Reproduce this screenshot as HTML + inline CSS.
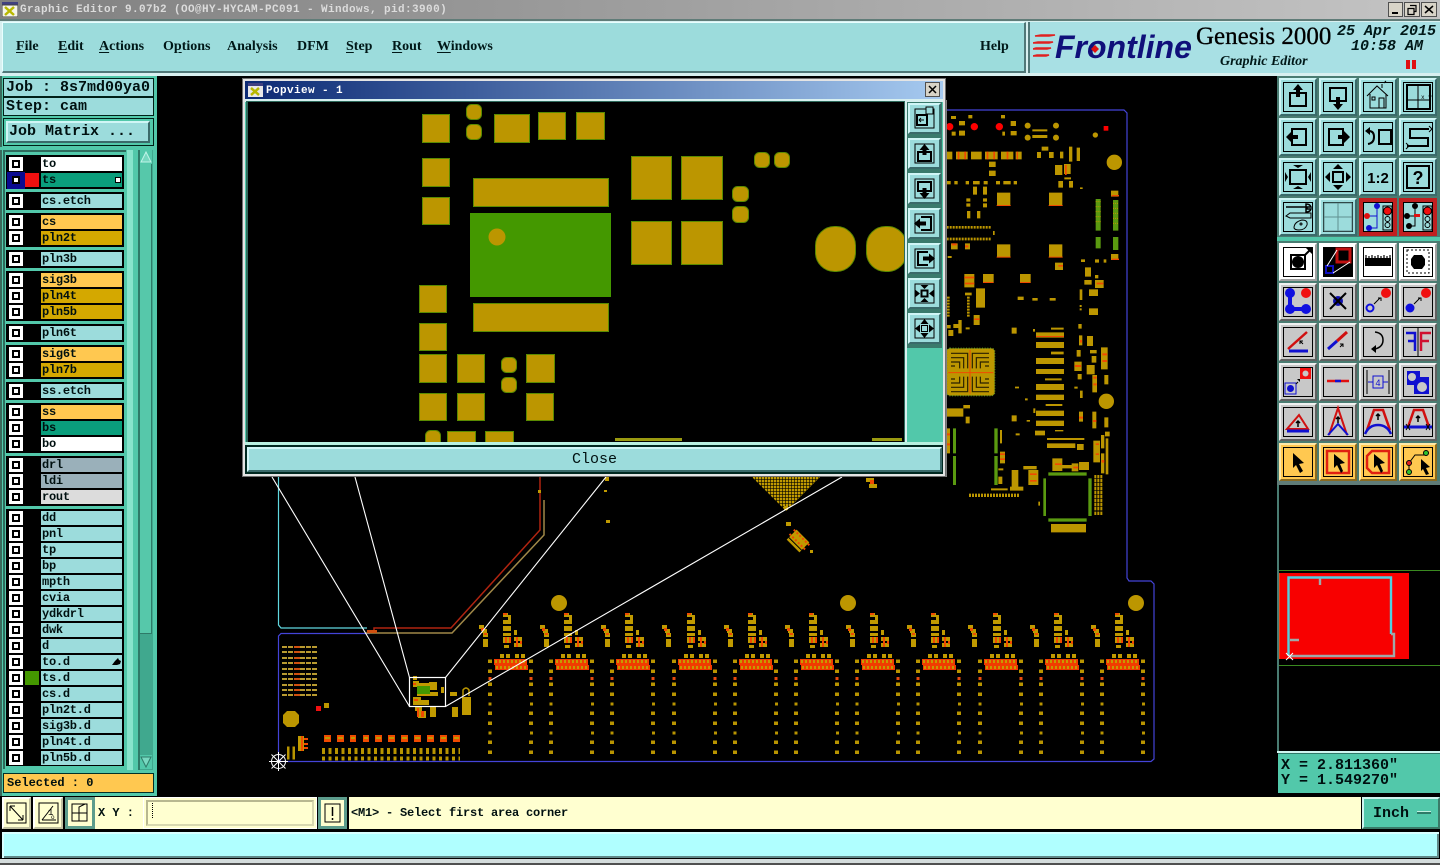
<!DOCTYPE html>
<html><head><meta charset="utf-8"><title>Genesis 2000 Graphic Editor</title>
<style>
html,body{margin:0;padding:0;background:#000;width:1440px;height:865px;overflow:hidden}
div,span,b,i,svg{box-sizing:border-box}
.a{position:absolute}
#pcb{position:absolute;left:0;top:0}
.mono{font-family:"Liberation Mono",monospace;font-weight:bold;color:#001010;white-space:pre}
.m{position:absolute;top:39px;font:bold 14px/16px "Liberation Serif",serif;color:#001818;white-space:pre}
.m u{text-decoration-thickness:1px;text-underline-offset:2px}
.g{position:absolute;left:6px;width:118px;background:#000}
.r{position:absolute;left:9px;width:113px;height:14px}
.c{position:absolute;left:0;top:0;width:14px;height:14px;background:#fff}
.c::after{content:"";position:absolute;left:3px;top:3px;width:8px;height:8px;border:2px solid #000;box-sizing:border-box;background:#fff}
.r span{position:absolute;left:32px;top:0;width:81px;height:14px;padding-left:1px;background:#9cdcdc;font:bold 12px/14px "Liberation Mono",monospace;letter-spacing:-.25px;color:#001010;white-space:pre}
.r .w{background:#fff}.r .e{background:#0a9e7c}.r .o{background:#ffc850}.r .y{background:#d4a800}.r .s{background:#9ab0ba}.r .l{background:#dcdcdc}
.t{position:absolute;width:38px;height:38px;background:#9cdcdc;border:2px solid;border-color:#d0f6f6 #3a6a6a #3a6a6a #d0f6f6}
.t::after{content:"";position:absolute;left:2px;top:2px;right:2px;bottom:2px;border:1px solid #000}
.t svg{position:absolute;left:-2px;top:-2px;width:38px;height:38px;z-index:1}
.k{background:#c8c8c8;border-color:#f0f0f0 #606060 #606060 #f0f0f0}
.h{background:#fff;border-color:#fff #a0a0a0 #a0a0a0 #fff}
.q{background:#ffc850;border-color:#ffe8a8 #8a6a20 #8a6a20 #ffe8a8}
.p{position:absolute;left:908px;width:33px;height:31px;background:#9cdcdc;border:2px solid;border-color:#d0f6f6 #3a6a6a #3a6a6a #d0f6f6}
.p svg{position:absolute;left:-2px;top:-2px;width:33px;height:31px}
.f{position:absolute;background:#ffffd0;border:2px solid;border-color:#fff #c0c0a0 #c0c0a0 #fff}
</style></head><body>

<svg id="pcb" width="1440" height="865" viewBox="0 0 1440 865">
<defs>
<g id="mod">
 <path fill="#c09a00" d="M-8 613h5v4h-5zM-3 615h3v5h-3zM-8 620h8v4h-8zM-8 626h8v5h-8zM-8 633h8v3h-8zM-8 637h8v6h-8zM-7 645h5v3h-5zM3 630h3v5h-3zM3 637h8v4h-8zM3 643h8v4h-8z"/>
 <path fill="#f04a00" d="M-8 613h4v2h-4zM-6 637h2v6h-2zM-2 637h2v6h-2zM5 637h2v10h-2zM9 641h2v3h-2z"/>
 <path fill="#c09a00" d="M-11 654h4v4h-4zM-5 654h4v4h-4zM4 654h4v4h-4zM10 654h4v4h-4z"/>
 <rect x="-17" y="659" width="33" height="6" fill="#f03c00"/><rect x="-16" y="665" width="33" height="5" fill="#f03c00"/>
 <path stroke="#c89a00" stroke-width="3" stroke-dasharray="2 2" fill="none" d="M-16 661.500h31M-15 667.500h31"/>
 <path fill="#b89400" d="M18 659.500h4v3.500h-4zM18 669.500h4v3.500h-4zM18 682.500h4v3.500h-4zM18 692.500h4v3.500h-4zM19 702.500h3v3h-3zM18 711.500h4v3.500h-4zM18 721.500h4v3.500h-4zM19 731.500h3v3h-3zM18 740.500h4v3.500h-4zM18 750.500h4v3.500h-4z"/>
 <path fill="#b89400" d="M-23 659.500h4v3.500h-4zM-23 669.500h4v3.500h-4zM-23 682.500h4v3.500h-4zM-23 692.500h4v3.500h-4zM-22.500 702.500h3v3h-3zM-23 711.500h4v3.500h-4zM-23 721.500h4v3.500h-4zM-22.500 731.500h3v3h-3zM-23 740.500h4v3.500h-4zM-23 750.500h4v3.500h-4z"/>
 <path fill="#e84a10" d="M18.500 677h3v3h-3zM-22.500 677h3v3h-3z"/>
</g>
<g id="side"><path fill="#c09a00" d="M29 625h5v4h-5zM32 629h5v4h-5zM33 633h5v4h-5zM33 639h5v8h-5z"/><path fill="#f04a00" d="M31 628h3v3h-3zM34 633h3v2h-3z"/></g>
<pattern id="hatch" width="3" height="3" patternUnits="userSpaceOnUse"><rect width="3" height="3" fill="#000"/><rect width="2.400" height="2.400" fill="#c09a00"/></pattern>
</defs>

<!-- board outline -->
<path fill="none" stroke="#4444d8" stroke-width="1.200" d="M946 110H1124L1127 113V578L1129 581H1151L1154 584V759L1151 761.500H281L278.500 759V636L281 633.500H370"/>
<path fill="none" stroke="#60d8e0" stroke-width="1.200" d="M278.500 477V625L281 628H367"/>
<path fill="none" stroke="#b02410" stroke-width="1.500" d="M369 631H374V628H451L540 530V477"/>
<path fill="none" stroke="#a08848" stroke-width="1.500" d="M366 633H452L544 535V500"/>
<rect x="367" y="630" width="10" height="3" fill="#d05010"/>

<!-- modules -->
<use href="#mod" x="511"/><use href="#mod" x="572"/><use href="#mod" x="633"/><use href="#mod" x="695"/><use href="#mod" x="756"/><use href="#mod" x="817"/><use href="#mod" x="878"/><use href="#mod" x="939"/><use href="#mod" x="1001"/><use href="#mod" x="1062"/><use href="#mod" x="1123"/>
<use href="#side" x="511"/><use href="#side" x="572"/><use href="#side" x="633"/><use href="#side" x="695"/><use href="#side" x="756"/><use href="#side" x="817"/><use href="#side" x="878"/><use href="#side" x="939"/><use href="#side" x="1001"/><use href="#side" x="1062"/>
<use href="#side" x="450"/>
<circle cx="559" cy="603" r="8" fill="#bc9600"/><circle cx="848" cy="603" r="8" fill="#bc9600"/><circle cx="1136" cy="603" r="8" fill="#bc9600"/>

<!-- bottom left -->
<path stroke="#b89a30" stroke-width="2" stroke-dasharray="5 1" fill="none" d="M282 647h36M282 652h36M282 658h36M282 663h36M282 669h36M282 674h36M282 679h36M282 685h36M282 690h36M282 695h36"/>
<path stroke="#d05010" stroke-width="2" stroke-dasharray="6 30" fill="none" d="M294 647h24M294 652h24M294 658h24M294 663h24M294 669h24M294 674h24M294 679h24M294 685h24M294 690h24M294 695h24"/>
<polygon points="287,711 295,711 299,715 299,723 295,727 287,727 283,723 283,715" fill="#bc9600"/>
<rect x="316" y="706" width="5" height="5" fill="#f01010"/><rect x="324" y="703" width="5" height="5" fill="#bc9600"/>
<path fill="#f04a00" d="M324 735h7v7h-7zM337 735h7v7h-7zM350 735h6v7h-6zM363 735h6v7h-6zM375 735h7v7h-7zM388 735h7v7h-7zM401 735h7v7h-7zM414 735h7v7h-7zM427 735h7v7h-7zM440 735h7v7h-7zM453 735h7v7h-7z"/>
<path fill="#c09a00" d="M325 737h5v2h-5zM338 737h5v2h-5zM351 737h4v2h-4zM364 737h4v2h-4zM376 737h5v2h-5zM389 737h5v2h-5zM402 737h5v2h-5zM415 737h5v2h-5zM428 737h5v2h-5zM441 737h5v2h-5zM454 737h5v2h-5z"/>
<path stroke="#b89400" stroke-width="6" stroke-dasharray="3 3.500" fill="none" d="M322 751h138"/>
<path stroke="#b89400" stroke-width="4" stroke-dasharray="3 3.500" fill="none" d="M322 758.500h138"/>
<path stroke="#b89400" stroke-width="13" stroke-dasharray="2.500 3" fill="none" d="M287 753h10"/>
<path fill="#c09a00" d="M298 736h6v15h-6z"/><path fill="#f04a00" d="M301 736h2v15h-2zM304 738h4v2h-4zM304 743h4v2h-4zM304 747h4v2h-4z"/>
<!-- small component at popup box -->
<path fill="#c09a00" d="M413 676h4v4h-4zM413 681h6v6h-6zM429 682h8v8h-8zM430 692h8v4h-8zM413 697h8v8h-8zM421 700h8v5h-8zM415 706h7v5h-7zM418 711h8v7h-8zM430 707h6v10h-6zM452 707h6v10h-6zM441 687h3v6h-3zM450 692h7v4h-7zM462 697h9v18h-9z"/>
<path fill="#f04a00" d="M413 683h3v2h-3zM414 699h4v2h-4zM417 708h2v9h-2zM421 711h3v6h-3z"/>
<rect x="417" y="683" width="13" height="13" fill="#449800"/><rect x="417" y="683" width="13" height="3" fill="#c09a00"/><rect x="417" y="694" width="13" height="2" fill="#c09a00"/>
<path fill="none" stroke="#b89400" stroke-width="1.500" d="M463 696V690Q466 686 469 690V696"/>

<!-- funnel, loose comps -->
<polygon points="752,477 820,477 786,511" fill="url(#hatch)"/>
<path fill="#c09a00" d="M866 478h8v4h-8zM869 484h8v4h-8zM605 477h4v4h-4zM604 490h3v2h-3zM606 520h4v3h-4zM538 490h3v3h-3z"/>
<rect x="870" y="480" width="4" height="4" fill="#f04a00"/>
<g transform="translate(798,541) rotate(45)"><rect x="-9" y="-7" width="18" height="14" fill="#c09a00"/><path stroke="#f04a00" stroke-width="2" stroke-dasharray="2 2" d="M-11 -5h22M-11 1h22"/><path stroke="#000" stroke-width="1" d="M-9 4h18"/></g>
<path fill="#c09a00" d="M786 522h5v4h-5zM810 550h3v3h-3zM784 506h4v4h-4z"/>

<!-- upper right board -->
<g transform="translate(945,100) scale(.33333)">
<circle cx="14" cy="80" r="11" fill="#f00"/><circle cx="88" cy="80" r="11" fill="#f00"/><circle cx="163" cy="80" r="11" fill="#f00"/>
<rect x="476" y="78" width="14" height="14" fill="#f00"/>
<g fill="#bc9600"><circle cx="248" cy="77" r="9"/><circle cx="333" cy="77" r="9"/><circle cx="248" cy="113" r="9"/><circle cx="333" cy="113" r="9"/><circle cx="508" cy="187" r="23"/><circle cx="484" cy="904" r="23"/><circle cx="451" cy="105" r="8"/></g>
<path fill="#bc9600" d="M18 48h15v9h-15zM70 45h12v10h-12zM168 45h12v10h-12zM5 155h17v23h-17zM33 155h35v23h-35zM78 155h32v23h-32zM120 155h38v23h-38zM168 155h37v23h-37zM212 155h18v23h-18zM42 63h18v13h-18zM197 63h16v15h-16zM20 95h12v12h-12zM42 92h18v15h-18zM172 95h8v12h-8zM197 93h18v13h-18zM262 88h45v6h-45zM262 105h45v9h-45zM290 140h20v12h-20zM276 156h12v18h-12zM312 156h14v18h-14zM372 140h10v45h-10zM395 143h10v40h-10zM345 155h10v20h-10zM330 195h22v30h-22zM357 192h20v30h-20zM358 232h20v6h-20zM340 243h14v20h-14zM372 243h12v20h-12zM405 262h8v5h-8zM132 185h20v16h-20zM132 212h20v16h-20zM5 243h12v10h-12zM28 243h10v10h-10zM62 243h10v10h-10zM84 243h20v10h-20zM116 243h12v10h-12zM153 243h12v10h-12zM175 243h22v10h-22zM206 243h10v10h-10zM84 260h12v24h-12zM114 260h12v24h-12zM64 295h12v10h-12zM64 310h12v10h-12zM114 295h12v10h-12zM114 310h12v12h-12zM66 333h10v22h-10zM96 333h10v22h-10zM144 393h5v12h-5zM18 430h20v18h-20zM60 430h15v18h-15zM8 468h12v6h-12zM156 278h40v39h-40zM312 278h40v39h-40zM156 433h40v39h-40zM312 433h40v39h-40zM114 522h32v26h-32zM225 522h32v26h-32zM93 565h27v58h-27zM58 522h30v40h-30zM218 590h18v10h-18zM262 594h16v8h-16zM314 594h18v8h-18zM60 578h20v8h-20zM86 645h18v30h-18zM5 675h12v10h-12zM25 672h16v12h-16zM40 660h10v40h-10zM62 682h12v6h-12zM10 690h15v18h-15zM200 683h15v18h-15zM264 687h6v8h-6zM200 946h15v18h-15zM318 683h38v6h-38zM273 697h84v16h-84zM273 726h84v18h-84zM318 755h38v8h-38zM273 774h84v18h-84zM273 807h84v15h-84zM300 835h50v6h-50zM273 852h84v18h-84zM273 884h84v16h-84zM302 912h50v6h-50zM273 932h84v16h-84zM273 962h84v16h-84zM330 990h25v4h-25zM404 568h8v32h-8zM404 615h6v6h-6zM404 625h6v6h-6zM432 568h27v20h-27zM432 625h27v20h-27zM498 272h22v18h-22zM498 462h22v18h-22zM450 478h12v10h-12zM476 478h8v10h-8zM408 478h12v8h-12zM330 488h24v22h-24zM420 502h18v28h-18zM450 525h10v10h-10zM450 540h26v24h-26zM418 540h22v14h-22zM400 672h10v14h-10zM402 706h10v30h-10zM426 708h18v30h-18zM395 750h12v20h-12zM435 750h20v10h-20zM440 768h14v20h-14zM468 742h20v66h-20zM388 785h22v28h-22zM425 795h24v28h-24zM398 822h12v16h-12zM442 825h14v52h-14zM478 825h12v28h-12zM388 860h10v6h-10zM405 872h8v22h-8zM402 935h12v30h-12zM442 935h12v50h-12zM478 952h12v30h-12zM270 992h30v14h-30zM480 995h14v14h-14zM306 1014h112v6h-112zM306 1030h85v14h-85zM396 1032h20v18h-20zM445 1022h20v65h-20zM468 1005h10v40h-10zM468 1060h10v60h-10zM482 1015h8v108h-8zM322 1075h30v38h-30zM352 1095h28v10h-28zM380 1090h20v24h-20zM402 1086h30v24h-30zM235 1098h40v10h-40zM250 1110h30v45h-30zM200 1110h20v50h-20zM138 1165h50v6h-50zM195 1160h40v12h-40zM165 990h6v40h-6zM165 1055h15v35h-15zM160 1105h15v6h-15zM160 1130h12v22h-12zM5 925h50v25h-50zM55 915h20v10h-20zM62 950h12v20h-12zM5 985h10v75h-10zM318 1272h105v25h-105zM280 1205h5v12h-5zM212 1000h12v6h-12zM240 895h8v6h-8zM210 860h12v5h-12zM265 925h6v14h-6zM245 960h10v5h-10z"/>
<path stroke="#bc9600" stroke-width="8" stroke-dasharray="6 3" fill="none" d="M5 382h135M5 417h135M10 590v60M70 590v60"/>
<path stroke="#bc9600" stroke-width="10" stroke-dasharray="6 3" fill="none" d="M72 1186h152M448 1130h24M448 1142h24M448 1154h24M448 1166h24M448 1178h24M448 1190h24M448 1202h24M448 1214h24M448 1226h24M448 1240h24"/>
<path fill="#f04a00" d="M155 315h42v3h-42zM311 315h42v3h-42zM155 470h42v3h-42zM311 470h42v3h-42zM114 546h32v3h-32zM225 546h32v3h-32zM38 155h5v23h-5zM58 155h5v23h-5zM125 155h5v23h-5zM145 155h5v23h-5zM185 155h5v23h-5zM215 155h4v23h-4zM273 708h84v3h-84zM360 195h5v30h-5zM20 430h15v6h-15zM60 436h10v6h-10zM58 530h30v5h-30zM60 548h28v5h-28zM88 655h16v5h-16zM472 760h14v6h-14zM472 780h14v6h-14zM405 720h6v8h-6zM445 830h10v6h-10zM445 850h10v6h-10zM390 795h18v6h-18zM5 1000h10v6h-10zM5 1030h10v6h-10zM165 1060h15v5h-15zM165 1075h15v5h-15zM255 1120h20v5h-20zM255 1140h20v5h-20zM330 1090h20v5h-20zM385 1100h15v5h-15zM452 1030h10v5h-10zM452 1060h10v5h-10zM470 1080h8v8h-8zM402 950h12v6h-12zM444 960h10v6h-10zM500 285h22v4h-22zM500 476h22v4h-22zM340 495h14v5h-14zM455 548h20v5h-20z"/>
<path fill="#5a9a10" d="M452 297h15v95h-15zM504 300h16v92h-16zM452 411h15v34h-15zM504 411h16v39h-16zM24 985h9v75h-9zM24 1068h9v87h-9zM148 985h10v75h-10zM148 1068h10v87h-10zM310 1117h115v10h-115zM310 1255h115v10h-115zM295 1135h8v113h-8zM430 1135h10v113h-10z"/>
<path stroke="#bc9600" stroke-width="3" stroke-dasharray="3 3" fill="none" d="M452 305h15M452 320h15M452 335h15M452 350h15M452 365h15M504 310h16M504 325h16M504 340h16M504 355h16M504 370h16"/>
<!-- BGA -->
<rect x="5" y="745" width="144" height="142" rx="10" fill="#bc9600"/>
<path fill="none" stroke="#2a2000" stroke-width="3.500" d="M18 760h50v45M18 773h38v32M18 786h26v19M18 798h12M82 805v-45h50M94 805v-32h38M106 805v-19h26M120 798h12M18 875h50v-45M18 862h38v-32M18 849h26v-19M18 837h12M82 830v45h50M94 830v32h38M106 830v19h26M120 837h12"/>
<path stroke="#f04a00" stroke-width="3" fill="none" d="M75 750v130M10 818h135"/>
<rect x="5" y="745" width="144" height="142" rx="10" fill="none" stroke="#6a9a20" stroke-width="4" stroke-dasharray="3 5"/>
</g>
<rect x="945" y="100" width="2" height="377" fill="#808080"/>

<!-- white lines -->
<rect x="409.500" y="677.500" width="36" height="29" fill="none" stroke="#fff" stroke-width="1.200"/>
<path fill="none" stroke="#fff" stroke-width="1.100" d="M409.500 677.500L355 477M409.500 706.500L272 477M445.500 677.500L606 477M445.500 706.500L842 477"/>
<!-- cursor -->
<g stroke="#fff" stroke-width="1" fill="none"><circle cx="278.500" cy="761.500" r="7"/><path d="M269 761.500h19M278.500 752v19M271.500 754.500l14 14M285.500 754.500l-14 14"/></g>
</svg>

<!-- Title bar -->
<div class="a" style="left:0;top:0;width:1440px;height:19px;background:linear-gradient(90deg,#808080,#c4c4c4)"></div>
<svg class="a" style="left:2px;top:2px" width="16" height="15" viewBox="0 0 16 15"><rect width="16" height="15" fill="#e8e8e8"/><rect width="16" height="3" fill="#404080"/><rect y="3" width="16" height="12" fill="#f4f4e8" stroke="#444"/><path d="M3 5l9 8M12 5l-9 8" stroke="#b8b800" stroke-width="2.500"/></svg>
<div class="a mono" style="left:20px;top:3px;font-size:11px;line-height:14px;letter-spacing:.4px;color:#dcdcdc">Graphic Editor 9.07b2 (OO@HY-HYCAM-PC091 - Windows, pid:3900)</div>
<svg class="a" style="left:1388px;top:2px" width="50" height="15" viewBox="0 0 50 15">
<g fill="#d8d4c8" stroke="#505050"><rect x=".5" y=".5" width="14" height="14"/><rect x="16.500" y=".5" width="15" height="14"/><rect x="33.500" y=".5" width="15" height="14"/></g>
<rect x="4" y="10" width="6" height="2" fill="#000"/><path d="M22 3.500h6v6h-2M20 6.500h6v6h-6z" fill="none" stroke="#000" stroke-width="1.200"/><path d="M37 4l8 7M45 4l-8 7" stroke="#000" stroke-width="1.500"/></svg>

<!-- Menu bar -->
<div class="a" style="left:0;top:19px;width:1440px;height:57px;background:#d8f0f0;border-top:2px solid #607c78"></div>
<div class="a" style="left:2px;top:22px;width:1024px;height:51px;background:#9cdcdc;border-left:1px solid #e8ffff;border-top:1px solid #e8ffff;border-right:2px solid #507878;border-bottom:2px solid #507878"></div>
<div class="m" style="left:16px"><u>F</u>ile</div>
<div class="m" style="left:58px"><u>E</u>dit</div>
<div class="m" style="left:99px"><u>A</u>ctions</div>
<div class="m" style="left:163px">O<u>p</u>tions</div>
<div class="m" style="left:227px">Analysis</div>
<div class="m" style="left:297px">DFM</div>
<div class="m" style="left:346px"><u>S</u>tep</div>
<div class="m" style="left:392px"><u>R</u>out</div>
<div class="m" style="left:437px"><u>W</u>indows</div>
<div class="m" style="left:980px">Help</div>
<!-- Logo -->
<div class="a" style="left:1028px;top:22px;width:412px;height:51px;background:#a8e0e4;border-left:2px solid #507878"></div>
<svg class="a" style="left:1033px;top:33px" width="24" height="26" viewBox="0 0 24 26"><path d="M22 2H8l-6 1h14zM20 9H5L0 10h16zM18 15H3l-3 1h14zM16 22H4l-4 1h13z" fill="#e02020" stroke="#e02020" stroke-width="1.600"/></svg>
<div class="a" style="left:1055px;top:29px;font:italic bold 32px/36px 'Liberation Sans',sans-serif;color:#10107a;white-space:pre">Frontline</div>
<svg class="a" style="left:1088px;top:42px" width="14" height="14"><path d="M7 3l4 4-4 4-4-4z" fill="#e01010"/></svg>
<div class="a" style="left:1196px;top:22px;font:25px/30px 'Liberation Serif',serif;color:#000;white-space:pre;-webkit-text-stroke:.3px #000">Genesis 2000</div>
<div class="a" style="left:1220px;top:54px;font:italic bold 14px/16px 'Liberation Serif',serif;color:#001818;white-space:pre">Graphic Editor</div>
<div class="a" style="left:1337px;top:24px;font:italic bold 15px/16px 'Liberation Mono',monospace;color:#001818;white-space:pre">25 Apr 2015</div>
<div class="a" style="left:1351px;top:39px;font:italic bold 15px/16px 'Liberation Mono',monospace;color:#001818;white-space:pre">10:58 AM</div>
<div class="a" style="left:1406px;top:60px;width:4px;height:9px;background:#e01010"></div>
<div class="a" style="left:1412px;top:60px;width:4px;height:9px;background:#e01010"></div>

<!-- Left panel -->
<div class="a" style="left:0;top:76px;width:157px;height:721px;background:#52c8aa;border-left:2px solid #3a6a5c"></div>
<div class="a mono" style="left:3px;top:78px;width:151px;height:19px;background:#9cdcdc;border:1px solid #002018;font-size:15px;line-height:18px;padding-left:2px">Job : 8s7md00ya0</div>
<div class="a mono" style="left:3px;top:97px;width:151px;height:19px;background:#9cdcdc;border:1px solid #002018;font-size:15px;line-height:18px;padding-left:2px">Step: cam</div>
<div class="a" style="left:3px;top:118px;width:151px;height:28px;background:#52c8aa;border:1px solid #002018"></div>
<div class="a mono" style="left:6px;top:121px;width:144px;height:22px;background:#9cdcdc;border:2px solid;border-color:#d0f6f6 #3a6a6a #3a6a6a #d0f6f6;font-size:15px;line-height:17px;padding-left:1px">Job Matrix ...</div>
<div class="a" style="left:0;top:147px;width:157px;height:3px;background:#52c8aa"></div>
<div class="a" style="left:3px;top:150px;width:123px;height:619px;background:#2e6a5c"></div>
<div class="a" style="left:5px;top:152px;width:122px;height:617px;background:#52c8aa"></div>

<div class="g" style="top:155px;height:34px"></div><div class="g" style="top:192px;height:18px"></div><div class="g" style="top:213px;height:34px"></div><div class="g" style="top:250px;height:18px"></div><div class="g" style="top:271px;height:50px"></div><div class="g" style="top:324px;height:18px"></div><div class="g" style="top:345px;height:34px"></div><div class="g" style="top:382px;height:18px"></div><div class="g" style="top:403px;height:50px"></div><div class="g" style="top:456px;height:50px"></div><div class="g" style="top:509px;height:257px"></div>

<div class="r" style="top:157px"><b class="c"></b><span class="w">to</span></div>
<div class="a" style="left:7px;top:172px;width:18px;height:17px;background:#0a0a90"></div>
<div class="a" style="left:25px;top:173px;width:14px;height:14px;background:#f01010"></div>
<div class="r" style="top:173px"><b class="a" style="left:3px;top:3px;width:8px;height:8px;background:#fff;border:2px solid #000"></b><span class="e">ts</span></div>
<div class="a" style="left:115px;top:177px;width:6px;height:6px;border:1px solid #000;background:#fff"></div>
<div class="r" style="top:194px"><b class="c"></b><span>cs.etch</span></div>
<div class="r" style="top:215px"><b class="c"></b><span class="o">cs</span></div>
<div class="r" style="top:231px"><b class="c"></b><span class="y">pln2t</span></div>
<div class="r" style="top:252px"><b class="c"></b><span>pln3b</span></div>
<div class="r" style="top:273px"><b class="c"></b><span class="o">sig3b</span></div>
<div class="r" style="top:289px"><b class="c"></b><span class="y">pln4t</span></div>
<div class="r" style="top:305px"><b class="c"></b><span class="y">pln5b</span></div>
<div class="r" style="top:326px"><b class="c"></b><span>pln6t</span></div>
<div class="r" style="top:347px"><b class="c"></b><span class="o">sig6t</span></div>
<div class="r" style="top:363px"><b class="c"></b><span class="y">pln7b</span></div>
<div class="r" style="top:384px"><b class="c"></b><span>ss.etch</span></div>
<div class="r" style="top:405px"><b class="c"></b><span class="o">ss</span></div>
<div class="r" style="top:421px"><b class="c"></b><span class="e">bs</span></div>
<div class="r" style="top:437px"><b class="c"></b><span class="w">bo</span></div>
<div class="r" style="top:458px"><b class="c"></b><span class="s">drl</span></div>
<div class="r" style="top:474px"><b class="c"></b><span class="s">ldi</span></div>
<div class="r" style="top:490px"><b class="c"></b><span class="l">rout</span></div>
<div class="r" style="top:511px"><b class="c"></b><span>dd</span></div>
<div class="r" style="top:527px"><b class="c"></b><span>pnl</span></div>
<div class="r" style="top:543px"><b class="c"></b><span>tp</span></div>
<div class="r" style="top:559px"><b class="c"></b><span>bp</span></div>
<div class="r" style="top:575px"><b class="c"></b><span>mpth</span></div>
<div class="r" style="top:591px"><b class="c"></b><span>cvia</span></div>
<div class="r" style="top:607px"><b class="c"></b><span>ydkdrl</span></div>
<div class="r" style="top:623px"><b class="c"></b><span>dwk</span></div>
<div class="r" style="top:639px"><b class="c"></b><span>d</span></div>
<div class="r" style="top:655px"><b class="c"></b><span>to.d</span></div>
<svg class="a" style="left:111px;top:657px" width="11" height="10"><path d="M1 8l3-4 3-3 1 2 2 1-1 3-3 1z" fill="#000"/></svg>
<div class="a" style="left:25px;top:671px;width:14px;height:14px;background:#449800"></div>
<div class="r" style="top:671px"><b class="c"></b><span>ts.d</span></div>
<div class="r" style="top:687px"><b class="c"></b><span>cs.d</span></div>
<div class="r" style="top:703px"><b class="c"></b><span>pln2t.d</span></div>
<div class="r" style="top:719px"><b class="c"></b><span>sig3b.d</span></div>
<div class="r" style="top:735px"><b class="c"></b><span>pln4t.d</span></div>
<div class="r" style="top:751px"><b class="c"></b><span>pln5b.d</span></div>

<!-- scrollbar -->
<div class="a" style="left:127px;top:150px;width:6px;height:620px;background:#88e4cc"></div>
<div class="a" style="left:133px;top:150px;width:5px;height:620px;background:#52c8aa"></div>
<div class="a" style="left:138px;top:150px;width:15px;height:620px;background:#40a88e;border-left:2px solid #2e7a68"></div>
<div class="a" style="left:140px;top:150px;width:12px;height:484px;background:#56c8aa;border-bottom:1px solid #2e7a68;border-right:1px solid #2e7a68"></div>
<svg class="a" style="left:140px;top:150px" width="12" height="14"><rect width="12" height="14" fill="#52c8aa"/><path d="M6 2l5 10H1z" fill="#78d8c0" stroke="#c0f4e8"/></svg>
<svg class="a" style="left:140px;top:755px" width="12" height="14"><rect width="12" height="14" fill="#52c8aa"/><path d="M6 12L1 2h10z" fill="#78d8c0" stroke="#2e7a68"/></svg>

<div class="a mono" style="left:3px;top:773px;width:151px;height:20px;background:#ffc850;border:1px solid #003028;font-size:12px;line-height:18px;padding-left:3px">Selected : 0</div>

<!-- Right toolbar -->
<div class="a" style="left:1277px;top:76px;width:163px;height:405px;background:#4a7c72"></div>
<div class="a" style="left:1277px;top:237px;width:163px;height:4px;background:#52c8aa"></div>
<div class="t" style="left:1279px;top:78px"><svg viewBox="0 0 38 38"><path d="M11 15h16v13H11z" fill="none" stroke="#000" stroke-width="2"/><path d="M19 6l-5 6h3v7h4v-7h3z"/></svg></div>
<div class="t" style="left:1319px;top:78px"><svg viewBox="0 0 38 38"><path d="M11 10h16v13H11z" fill="none" stroke="#000" stroke-width="2"/><path d="M19 32l-5-6h3v-7h4v7h3z"/></svg></div>
<div class="t" style="left:1359px;top:78px"><svg viewBox="0 0 38 38" fill="none" stroke="#000"><path d="M8 18L18 8l11 10M11 16v14h16V16M23 10V6M25 5l2-2"/><path d="M13 19h3v3h-3zM20 20h5v10h-5z"/></svg></div>
<div class="t" style="left:1399px;top:78px"><svg viewBox="0 0 38 38" fill="none" stroke="#000"><path d="M8 7h23v24H8z" stroke-width="2"/><path d="M8 22h23M19 7v24"/><text x="22" y="21" font-size="6" font-family="Liberation Mono" fill="#000" stroke="none">x y</text></svg></div>

<div class="t" style="left:1279px;top:118px"><svg viewBox="0 0 38 38"><path d="M13 11h14v16H13z" fill="none" stroke="#000" stroke-width="2"/><path d="M7 19l6-6v4h6v4h-6v4z"/></svg></div>
<div class="t" style="left:1319px;top:118px"><svg viewBox="0 0 38 38"><path d="M10 11h14v16H10z" fill="none" stroke="#000" stroke-width="2"/><path d="M31 19l-6-6v4h-6v4h6v4z"/></svg></div>
<div class="t" style="left:1359px;top:118px"><svg viewBox="0 0 38 38"><path d="M20 12h12v14H20z" fill="none" stroke="#000" stroke-width="2"/><path d="M10 13q5 0 5 6t-6 7" fill="none" stroke="#000" stroke-width="2"/><path d="M6 13l5-4v8z"/></svg></div>
<div class="t" style="left:1399px;top:118px"><svg viewBox="0 0 38 38" fill="none" stroke="#000" stroke-width="2"><path d="M30 11H11v9h18v8H8"/><path d="M30 8l3 3-3 3M7 25l3 3-3 3" stroke-width="1"/></svg></div>

<div class="t" style="left:1279px;top:158px"><svg viewBox="0 0 38 38"><path d="M11 12h16v14H11z" fill="none" stroke="#000" stroke-width="2"/><path d="M19 10l-5-3h10zM19 28l-5 3h10zM9 19l-3-5v10zM29 19l3-5v10z"/></svg></div>
<div class="t" style="left:1319px;top:158px"><svg viewBox="0 0 38 38"><path d="M14 14h10v10H14z" fill="none" stroke="#000" stroke-width="2"/><path d="M19 6l-5 5h10zM19 32l-5-5h10zM6 19l5-5v10zM32 19l-5-5v10z"/></svg></div>
<div class="t" style="left:1359px;top:158px"><svg viewBox="0 0 38 38"><text x="19" y="25" text-anchor="middle" font-family="Liberation Sans" font-weight="bold" font-size="15" fill="#000">1:2</text></svg></div>
<div class="t" style="left:1399px;top:158px"><svg viewBox="0 0 38 38"><path d="M8 8h22v22H8z" fill="none" stroke="#000" stroke-width="2"/><text x="19" y="26" text-anchor="middle" font-family="Liberation Sans" font-weight="bold" font-size="18" fill="#000">?</text></svg></div>

<div class="t" style="left:1279px;top:198px"><svg viewBox="0 0 38 38" fill="none" stroke="#000"><path d="M7 9h20M27 6q4 0 5 3h-4v2h4q-1 3-5 3z" stroke-width="1.500"/><path d="M7 18l4-3h21v5H11z"/><path d="M15 30q0-6 8-8 6 0 5 5-2 5-8 5-4 0-5-2z"/><circle cx="22" cy="26" r="1"/></svg></div>
<div class="t" style="left:1319px;top:198px"><svg viewBox="0 0 38 38" fill="none" stroke="#609090"><path d="M5 5h28v28H5zM5 19h28M19 5v28"/></svg></div>
<div class="t" style="left:1359px;top:198px;border-color:#c02020;background:#9cdcdc;box-shadow:inset 0 0 0 2px #c02020"><svg viewBox="0 0 38 38"><path d="M24 8h9v24h-9z" fill="none" stroke="#000"/><circle cx="28.500" cy="13" r="4" fill="#f01010" stroke="#000"/><circle cx="28.500" cy="21" r="2.500" fill="none" stroke="#000"/><circle cx="28.500" cy="27" r="2.500" fill="none" stroke="#000"/><path d="M18 8v14M8 18h10M18 22v8h-8" stroke="#1010d0" fill="none"/><circle cx="18" cy="8" r="3" fill="#1010d0"/><circle cx="8" cy="18" r="3" fill="#e01010"/><circle cx="10" cy="30" r="3" fill="#1010d0"/></svg></div>
<div class="t" style="left:1399px;top:198px;border-color:#c02020;box-shadow:inset 0 0 0 2px #c02020"><svg viewBox="0 0 38 38"><path d="M24 8h9v24h-9z" fill="none" stroke="#000"/><circle cx="28.500" cy="13" r="4" fill="#f01010" stroke="#000"/><circle cx="28.500" cy="21" r="2.500" fill="none" stroke="#000"/><circle cx="28.500" cy="27" r="2.500" fill="none" stroke="#000"/><path d="M16 8v10H8M16 18v10h-6" stroke="#000" fill="none"/><circle cx="16" cy="8" r="3"/><circle cx="8" cy="18" r="3"/><circle cx="10" cy="28" r="3"/><path d="M15 16h6v3h-6z" fill="#e01010"/></svg></div>

<!-- second group -->
<div class="t h" style="left:1279px;top:243px"><svg viewBox="0 0 38 38"><path d="M12 12h14v14H12z" fill="none" stroke="#000" stroke-width="2"/><circle cx="19" cy="19" r="6"/><path d="M26 12l5-5" stroke="#000" stroke-width="2"/><path d="M33 4v7l-7-7z"/></svg></div>
<div class="t h" style="left:1319px;top:243px"><svg viewBox="0 0 38 38"><rect x="5" y="5" width="28" height="28" fill="#000"/><path d="M18 6h13v13H18z" fill="#000" stroke="#c01010" stroke-width="3"/><path d="M7 23h7v7H7z" fill="#000" stroke="#1010c0" stroke-width="2"/><path d="M8 23L18 7M14 30l17-11" stroke="#fff" fill="none"/></svg></div>
<div class="t h" style="left:1359px;top:243px"><svg viewBox="0 0 38 38"><rect x="6" y="15" width="26" height="8"/><path d="M7 15v-3M10 15v-2M13 15v-3M16 15v-2M19 15v-3M22 15v-2M25 15v-3M28 15v-2M31 15v-3" stroke="#000" stroke-width="1.200"/></svg></div>
<div class="t h" style="left:1399px;top:243px"><svg viewBox="0 0 38 38"><path d="M8 7h22v23H8z" fill="none" stroke="#000" stroke-dasharray="2 2"/><polygon points="15,12 23,12 26,16 26,22 23,26 15,26 12,22 12,16"/></svg></div>

<div class="t k" style="left:1279px;top:283px"><svg viewBox="0 0 38 38"><path d="M11 10v16h16" fill="none" stroke="#1010e0" stroke-width="4"/><circle cx="11" cy="10" r="5" fill="#1010e0"/><circle cx="11" cy="26" r="5" fill="#1010e0"/><circle cx="27" cy="26" r="5" fill="#1010e0"/><circle cx="27" cy="10" r="5" fill="#f01010"/></svg></div>
<div class="t k" style="left:1319px;top:283px"><svg viewBox="0 0 38 38"><circle cx="19" cy="18" r="5" fill="#1010b0"/><path d="M11 10l16 16M27 10L11 26" stroke="#000" stroke-width="2"/></svg></div>
<div class="t k" style="left:1359px;top:283px"><svg viewBox="0 0 38 38"><circle cx="11" cy="25" r="3.500" fill="none" stroke="#1010e0" stroke-width="2"/><circle cx="27" cy="10" r="5" fill="#f01010"/><path d="M15 21l6-6M19 15h3v3" stroke="#000" fill="none"/></svg></div>
<div class="t k" style="left:1399px;top:283px"><svg viewBox="0 0 38 38"><circle cx="11" cy="25" r="4.500" fill="#1010e0"/><circle cx="27" cy="10" r="5" fill="#f01010"/><path d="M15 21l6-6M19 15h3v3" stroke="#000" fill="none"/></svg></div>

<div class="t k" style="left:1279px;top:323px"><svg viewBox="0 0 38 38"><path d="M9 26L28 9" stroke="#d01010" stroke-width="2.500"/><path d="M10 28h19" stroke="#1010d0" stroke-width="3"/><path d="M24 21l-3-3M21 21v-3h3" stroke="#000" fill="none"/></svg></div>
<div class="t k" style="left:1319px;top:323px"><svg viewBox="0 0 38 38"><path d="M28 9L18 18" stroke="#d01010" stroke-width="3"/><path d="M18 18l-9 8" stroke="#1010d0" stroke-width="3"/><path d="M21 24l3-3M21 21h3v3" stroke="#000" fill="none"/></svg></div>
<div class="t k" style="left:1359px;top:323px"><svg viewBox="0 0 38 38"><path d="M16 9q8 1 8 8t-8 9" fill="none" stroke="#000" stroke-width="1.500"/><path d="M12 26l5-4v8z"/></svg></div>
<div class="t k" style="left:1399px;top:323px"><svg viewBox="0 0 38 38"><path d="M19 5v28" stroke="#000"/><path d="M7 10h9v18M9 18h7" fill="none" stroke="#1010d0" stroke-width="2.500"/><path d="M22 28V10h10M22 18h8" fill="none" stroke="#d01030" stroke-width="2.500"/></svg></div>

<div class="t k" style="left:1279px;top:363px"><svg viewBox="0 0 38 38"><rect x="21" y="5" width="11" height="11" fill="#f01010"/><circle cx="26.500" cy="10.500" r="3" fill="#c8c8c8"/><rect x="6" y="20" width="11" height="11" fill="none" stroke="#1010d0"/><circle cx="11.500" cy="25.500" r="3.500" fill="#1010d0"/><path d="M17 21l2-2" stroke="#000"/><path d="M18 16h3v3z"/></svg></div>
<div class="t k" style="left:1319px;top:363px"><svg viewBox="0 0 38 38"><path d="M8 18h22" stroke="#e01010" stroke-width="2.500"/><path d="M16 18h6" stroke="#1010d0" stroke-width="2.500"/></svg></div>
<div class="t k" style="left:1359px;top:363px"><svg viewBox="0 0 38 38"><path d="M8 7v24M30 7v24" stroke="#000"/><path d="M9 19h20" stroke="#1010d0"/><rect x="14" y="13" width="10" height="12" fill="#c8c8c8" stroke="#1010d0"/><text x="19" y="23" text-anchor="middle" font-size="9" font-family="Liberation Sans" fill="#1010d0">4</text></svg></div>
<div class="t k" style="left:1399px;top:363px"><svg viewBox="0 0 38 38"><path d="M8 8h13v6h9v17H15v-9H8z" fill="#1010d0"/><circle cx="13" cy="14" r="4" fill="#c8c8c8"/><circle cx="23" cy="24" r="5" fill="#c8c8c8"/></svg></div>

<div class="t k" style="left:1279px;top:403px"><svg viewBox="0 0 38 38"><path d="M8 26L20 12l9 14z" fill="none" stroke="#d01010" stroke-width="2"/><path d="M8 28h22" stroke="#1010d0" stroke-width="3"/><path d="M19 24v-6M17 20l2-2 2 2" stroke="#000" fill="none" stroke-width="1.500"/></svg></div>
<div class="t k" style="left:1319px;top:403px"><svg viewBox="0 0 38 38"><path d="M10 32L19 5l9 27" fill="none" stroke="#d01010" stroke-width="2"/><path d="M9 32l10-11 10 11" fill="none" stroke="#1010d0" stroke-width="2"/><path d="M19 20v-6M17 16l2-2 2 2" stroke="#000" fill="none" stroke-width="1.500"/></svg></div>
<div class="t k" style="left:1359px;top:403px"><svg viewBox="0 0 38 38"><path d="M8 27L15 7h9l7 20" fill="none" stroke="#d01010" stroke-width="2.500"/><path d="M6 31q4-9 13-9t13 9" fill="none" stroke="#1010d0" stroke-width="2.500"/><path d="M19 17v-6M17 13l2-2 2 2" stroke="#000" fill="none" stroke-width="1.500"/></svg></div>
<div class="t k" style="left:1399px;top:403px"><svg viewBox="0 0 38 38"><path d="M9 24L15 7h9l6 17" fill="none" stroke="#d01010" stroke-width="2.500"/><path d="M5 24h28" stroke="#1010d0" stroke-width="3"/><path d="M7 21l4 6M11 21l-4 6M27 21l4 6M31 21l-4 6" stroke="#000"/><path d="M19 19v-6M17 15l2-2 2 2" stroke="#000" fill="none" stroke-width="1.500"/></svg></div>

<div class="t q" style="left:1279px;top:443px"><svg viewBox="0 0 38 38"><path d="M14 10v15l3-3 4 8 3-2-4-7 5-1z"/></svg></div>
<div class="t q" style="left:1319px;top:443px"><svg viewBox="0 0 38 38"><path d="M8 8h22v22H8z" fill="none" stroke="#e02010" stroke-width="2.500"/><path d="M15 11v14l3-3 4 8 2-2-3-7 5-1z"/></svg></div>
<div class="t q" style="left:1359px;top:443px"><svg viewBox="0 0 38 38"><path d="M13 8h17v22H13l-5-5V13z" fill="none" stroke="#e02010" stroke-width="2.500"/><path d="M15 11v14l3-3 4 8 2-2-3-7 5-1z"/></svg></div>
<div class="t q" style="left:1399px;top:443px"><svg viewBox="0 0 38 38"><path d="M10 28v-8l6-8h10" fill="none" stroke="#000"/><circle cx="27" cy="10" r="2.500" fill="#30c030" stroke="#000"/><circle cx="10" cy="20" r="2.500" fill="#e02020" stroke="#000"/><circle cx="10" cy="29" r="2.500" fill="#30c030" stroke="#000"/><path d="M22 16v12l2-2 3 6 3-1-3-6 4-1z"/></svg></div>
<div class="a" style="left:1277px;top:481px;width:163px;height:4px;background:#607c78"></div>

<!-- Overview -->
<div class="a" style="left:1277px;top:485px;width:2px;height:266px;background:#4a7c72"></div>
<svg class="a" style="left:1279px;top:485px" width="161" height="266" viewBox="1279 485 161 266">
<path d="M1279 570.500h161M1279 665.500h161" stroke="#3a8a20"/>
<rect x="1278" y="573" width="131" height="86" fill="#f80000"/>
<path d="M1279 573v86" stroke="#e08020"/>
<path d="M1298 577.500h-9.500V656M1391 634V577.500H1298" fill="none" stroke="#50d0e0" stroke-width="2.400"/>
<path d="M1289 656h105V634h-3M1320 578v7M1290 640h9" fill="none" stroke="#a0a8a8" stroke-width="2.400"/>
<path d="M1286 653l7 7M1293 653l-7 7" stroke="#fff"/>
</svg>
<div class="a" style="left:1277px;top:751px;width:163px;height:2px;background:#d0f6f0"></div>
<div class="a mono" style="left:1278px;top:753px;width:162px;height:40px;background:#52c8aa;border-top:1px solid #2e7a68;font-size:15px;line-height:15px;padding:4px 0 0 3px">X = 2.811360"
Y = 1.549270"</div>

<!-- Bottom bar -->
<div class="a" style="left:0;top:796px;width:1440px;height:35px;background:#000"></div>
<div class="f" style="left:2px;top:797px;width:29px;height:32px"><svg class="a" style="left:2px;top:3px" width="21" height="22"><path d="M1 1h19v20H1z" fill="none" stroke="#000"/><path d="M4 4l13 14M4 4h5M4 4v5M17 18h-5M17 18v-5" stroke="#000" fill="none"/></svg></div>
<div class="f" style="left:33px;top:797px;width:30px;height:32px"><svg class="a" style="left:3px;top:3px" width="21" height="22"><path d="M1 1h19v20H1z" fill="none" stroke="#000"/><path d="M4 18L15 4M4 18h14" stroke="#000" fill="none"/><text x="10" y="13" font-size="9" font-family="Liberation Mono" fill="#000">1</text><text x="13" y="17" font-size="6" font-family="Liberation Mono" fill="#000">o</text></svg></div>
<div class="a" style="left:65px;top:797px;width:30px;height:32px;background:#ffffd0;border:3px solid #5c9c8c"><svg class="a" style="left:3px;top:3px" width="18" height="20"><path d="M1 1h15v17H1zM1 10h15M8 10v8M8 10L8 4 14 1" stroke="#000" fill="none"/></svg></div>
<div class="a" style="left:95px;top:797px;width:48px;height:32px;background:#ffffd0"></div>
<div class="a mono" style="left:98px;top:806px;font-size:12px;line-height:14px">X Y :</div>
<div class="a" style="left:143px;top:797px;width:174px;height:32px;background:#ffffd0;border:1px solid #fff"></div>
<div class="a" style="left:146px;top:800px;width:168px;height:26px;background:#ffffd0;border:2px solid;border-color:#b8b890 #d8d8b0 #d8d8b0 #b8b890"></div>
<div class="a" style="left:152px;top:803px;width:1px;height:15px;border-left:1px dotted #000"></div>
<div class="a" style="left:318px;top:797px;width:29px;height:32px;background:#ffffd0;border:3px solid #5c9c8c"><svg class="a" style="left:3px;top:3px" width="17" height="20"><path d="M1 1h15v18H1z" fill="none" stroke="#000"/><path d="M8.500 4v9M8.500 15v2" stroke="#000" stroke-width="1.500"/></svg></div>
<div class="a" style="left:349px;top:797px;width:1012px;height:32px;background:#ffffd0"></div>
<div class="a mono" style="left:351px;top:806px;font-size:12px;line-height:14px;letter-spacing:-.2px">&lt;M1&gt; - Select first area corner</div>
<div class="a mono" style="left:1362px;top:797px;width:78px;height:32px;background:#52c8aa;border:2px solid;border-color:#d0f6f0 #3a7a68 #3a7a68 #d0f6f0;font-size:15px;line-height:29px;padding-left:9px">Inch</div>
<div class="a" style="left:1417px;top:811px;width:14px;height:3px;background:#2e7a68;border-top:1px solid #c0f0e0"></div>

<!-- Status -->
<div class="a" style="left:0;top:831px;width:1440px;height:28px;background:#b0ffff;border:1px solid #000;border-left:2px solid #000;box-shadow:inset 2px 2px 0 #d8ffff,inset -2px -2px 0 #608888"></div>
<div class="a" style="left:0;top:859px;width:1440px;height:4px;background:#d4dcdc"></div>
<div class="a" style="left:0;top:863px;width:1440px;height:2px;background:#505050"></div>

<!-- Popview window -->
<div class="a" style="left:242px;top:78px;width:704px;height:399px;background:#e4e4e4;border:1px solid #707070"></div>
<div class="a" style="left:245px;top:81px;width:698px;height:393px;background:#52c8aa"></div>
<div class="a" style="left:245px;top:81px;width:698px;height:18px;background:linear-gradient(90deg,#0c2a74,#a6caf0)"></div>
<svg class="a" style="left:248px;top:83px" width="15" height="14" viewBox="0 0 15 14"><rect width="15" height="14" fill="#e8e8e8"/><rect width="15" height="3" fill="#404080"/><path d="M3 5l8 7M11 5l-8 7" stroke="#b8b800" stroke-width="2.500"/></svg>
<div class="a mono" style="left:266px;top:84px;font-size:11px;line-height:14px;letter-spacing:.4px;color:#fff">Popview - 1</div>
<svg class="a" style="left:925px;top:82px" width="15" height="15"><rect x=".5" y=".5" width="14" height="14" fill="#d8d4c8" stroke="#505050"/><path d="M4 4l7 7M11 4l-7 7" stroke="#000" stroke-width="1.500"/></svg>
<div class="a" style="left:245px;top:99px;width:698px;height:3px;background:#d8f0f0"></div>
<div class="a" style="left:246px;top:101px;width:659px;height:343px;background:#2e6a5c"></div>
<svg class="a" style="left:248px;top:102px;background:#000" width="656" height="340" viewBox="248 102 656 340">
<g fill="#bc9600" stroke="#5a8a00">
<rect x="422.500" y="114.500" width="27" height="28"/><rect x="494.500" y="114.500" width="35" height="28"/><rect x="538.500" y="112.500" width="27" height="27"/><rect x="576.500" y="112.500" width="28" height="27"/>
<rect x="466.500" y="104.500" width="15" height="15" rx="5"/><rect x="466.500" y="124.500" width="15" height="15" rx="5"/>
<rect x="422.500" y="158.500" width="27" height="28"/><rect x="422.500" y="197.500" width="27" height="27"/>
<rect x="473.500" y="178.500" width="135" height="28"/>
<rect x="473.500" y="303.500" width="135" height="28"/>
<rect x="631.500" y="156.500" width="40" height="43"/><rect x="681.500" y="156.500" width="41" height="43"/><rect x="631.500" y="221.500" width="40" height="43"/><rect x="681.500" y="221.500" width="41" height="43"/>
<rect x="754.500" y="152.500" width="15" height="15" rx="5"/><rect x="774.500" y="152.500" width="15" height="15" rx="5"/><rect x="732.500" y="186.500" width="16" height="15" rx="5"/><rect x="732.500" y="206.500" width="16" height="16" rx="5"/>
<rect x="815.500" y="226.500" width="40" height="45" rx="19"/><rect x="866.500" y="226.500" width="40" height="45" rx="19"/>
<rect x="419.500" y="285.500" width="27" height="27"/><rect x="419.500" y="323.500" width="27" height="27"/><rect x="419.500" y="354.500" width="27" height="28"/><rect x="457.500" y="354.500" width="27" height="28"/><rect x="526.500" y="354.500" width="28" height="28"/>
<rect x="501.500" y="357.500" width="15" height="15" rx="5"/><rect x="501.500" y="377.500" width="15" height="15" rx="5"/>
<rect x="419.500" y="393.500" width="27" height="27"/><rect x="457.500" y="393.500" width="27" height="27"/><rect x="526.500" y="393.500" width="27" height="27"/>
<rect x="425.500" y="430.500" width="15" height="20" rx="5"/><rect x="447.500" y="431.500" width="28" height="20"/><rect x="485.500" y="431.500" width="28" height="20"/>
</g>
<rect x="470" y="213" width="141" height="84" fill="#449800"/>
<circle cx="497" cy="237" r="8.500" fill="#bc9600"/>
<rect x="615" y="438" width="67" height="3" fill="#9a9a10"/><rect x="872" y="438" width="30" height="3" fill="#9a9a10"/>
</svg>
<!-- popup toolbar -->
<div class="a" style="left:905px;top:102px;width:2px;height:342px;background:#d8f0f0"></div>
<div class="a" style="left:907px;top:102px;width:35px;height:246px;background:#3a7a6c"></div>
<div class="p" style="top:103px"><svg viewBox="0 0 33 31"><path d="M7 6h19v19H7z" fill="none" stroke="#000"/><path d="M9 12h10v10H9z" fill="none" stroke="#000" stroke-width="2"/><path d="M18 4h7v7h-7z" fill="#9cdcdc" stroke="#000"/><path d="M11 17h5M11 17l2-2M11 17l2 2" stroke="#000" fill="none"/></svg></div>
<div class="p" style="top:138px"><svg viewBox="0 0 33 31"><path d="M7 6h19v19H7z" fill="none" stroke="#000"/><path d="M10 14h13v9H10z" fill="none" stroke="#000" stroke-width="2"/><path d="M16.500 6l-5 6h3v5h4v-5h3z"/></svg></div>
<div class="p" style="top:173px"><svg viewBox="0 0 33 31"><path d="M7 6h19v19H7z" fill="none" stroke="#000"/><path d="M10 9h13v9H10z" fill="none" stroke="#000" stroke-width="2"/><path d="M16.500 26l-5-6h3v-5h4v5h3z"/></svg></div>
<div class="p" style="top:208px"><svg viewBox="0 0 33 31"><path d="M7 6h19v19H7z" fill="none" stroke="#000"/><path d="M13 9h10v13H13" fill="none" stroke="#000" stroke-width="2"/><path d="M6 15.500l6-5v3h6v4h-6v3z"/></svg></div>
<div class="p" style="top:243px"><svg viewBox="0 0 33 31"><path d="M7 6h19v19H7z" fill="none" stroke="#000"/><path d="M20 9H10v13h10" fill="none" stroke="#000" stroke-width="2"/><path d="M27 15.500l-6-5v3h-6v4h6v3z"/></svg></div>
<div class="p" style="top:278px"><svg viewBox="0 0 33 31"><path d="M7 6h19v19H7z" fill="none" stroke="#000"/><path d="M13.500 12.500h6v6h-6z" fill="none" stroke="#000" stroke-width="2"/><path d="M16.500 11l-4-4h8zM16.500 20l-4 4h8zM12 15.500l-5-4v8zM21 15.500l5-4v8z"/></svg></div>
<div class="p" style="top:313px"><svg viewBox="0 0 33 31"><path d="M7 6h19v19H7z" fill="none" stroke="#000"/><path d="M13.500 12.500h6v6h-6z" fill="none" stroke="#000"/><path d="M16.500 6l-4 5h8zM16.500 25l-4-5h8zM7 15.500l5-4v8zM26 15.500l-5-4v8z"/></svg></div>
<!-- close -->
<div class="a" style="left:245px;top:442px;width:698px;height:3px;background:#b8f0e0"></div>
<div class="a" style="left:245px;top:445px;width:698px;height:29px;background:#002820"></div>
<div class="a mono" style="left:247px;top:447px;width:695px;height:25px;background:#9cdcdc;border:2px solid;border-color:#d0f6f6 #3a6a6a #3a6a6a #d0f6f6;font-size:15px;line-height:21px;text-align:center;font-weight:normal;color:#001010">Close</div>
</body></html>
